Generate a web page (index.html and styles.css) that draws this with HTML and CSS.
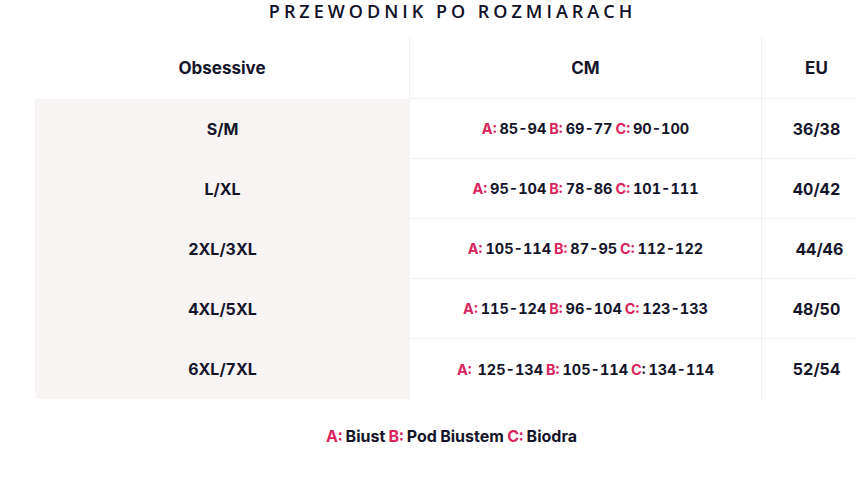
FILE: index.html
```html
<!DOCTYPE html>
<html lang="pl">
<head>
<meta charset="utf-8">
<link rel="stylesheet" href="styles.css">
</head>
<body>
<div class="page">
  <h1 class="title">PRZEWODNIK PO ROZMIARACH</h1>
  <div class="table">
    <div class="cell head c1"><span>Obsessive</span></div>
    <div class="cell head c2"><span>CM</span></div>
    <div class="cell head c3"><span>EU</span></div>

    <div class="cell size"><span>S/M</span></div>
    <div class="cell c2"><span><span class="k">A:</span> 85-94 <span class="k">B:</span> 69-77 <span class="k">C:</span> 90-100</span></div>
    <div class="cell c3"><span>36/38</span></div>

    <div class="cell size"><span>L/XL</span></div>
    <div class="cell c2"><span><span class="k">A:</span> 95-104 <span class="k">B:</span> 78-86 <span class="k">C:</span> 101-111</span></div>
    <div class="cell c3"><span>40/42</span></div>

    <div class="cell size"><span>2XL/3XL</span></div>
    <div class="cell c2"><span><span class="k">A:</span> 105-114 <span class="k">B:</span> 87-95 <span class="k">C:</span> 112-122</span></div>
    <div class="cell c3 shift"><span>44/46</span></div>

    <div class="cell size"><span>4XL/5XL</span></div>
    <div class="cell c2"><span><span class="k">A:</span> 115-124 <span class="k">B:</span> 96-104 <span class="k">C:</span> 123-133</span></div>
    <div class="cell c3"><span>48/50</span></div>

    <div class="cell size"><span>6XL/7XL</span></div>
    <div class="cell c2 last"><span><span class="k">A:</span>&nbsp; 125-134 <span class="k">B:</span> 105-114 <span class="k">C</span>: 134-114</span></div>
    <div class="cell c3 last"><span>52/54</span></div>
  </div>
  <p class="legend"><span class="k">A:</span> Biust <span class="k">B:</span> Pod Biustem <span class="k">C:</span> Biodra</p>
</div>
</body>
</html>
```
FILE: styles.css
```css
html, body {
  margin: 0;
  padding: 0;
  background: #ffffff;
  overflow: hidden;
}
.page {
  width: 855px;
  height: 500px;
  overflow: hidden;
  font-family: "Inter", "Liberation Sans", sans-serif;
  font-variant-numeric: tabular-nums;
  color: #14142b;
}
.title {
  margin: 0;
  height: 37px;
  line-height: 22px;
  text-align: center;
  font-family: "Open Sans", "Lato", sans-serif;
  font-weight: 600;
  font-size: 18px;
  letter-spacing: 4px;
  color: #101028;
  padding-left: 50px;
}
.table {
  margin-left: 35px;
  width: 836px;
  display: grid;
  grid-template-columns: 375px 351px 110px;
  grid-template-rows: 62px repeat(5, 60px);
}
.cell {
  display: flex;
  align-items: center;
  justify-content: center;
  font-weight: 700;
  font-size: 16px;
  white-space: nowrap;
}
.head {
  font-size: 17px;
}
.head.c1 {
  border-right: 1px solid #f0f0f0;
}
.size {
  background: #f9f4f4;
}
.c2 {
  font-size: 14.5px;
  word-spacing: -1px;
  border-bottom: 1px solid #f0f0f0;
}
.head.c2 {
  font-size: 17px;
}
.c3 {
  border-bottom: 1px solid #f0f0f0;
  border-left: 1px solid #f0f0f0;
}
.last {
  border-bottom: none;
}
.shift {
  padding-left: 6px;
}
.k {
  color: #d9245e;
}
.legend {
  margin: 27px 0 0;
  padding-left: 48px;
  text-align: center;
  font-weight: 700;
  font-size: 16px;
  word-spacing: -1px;
}
```
